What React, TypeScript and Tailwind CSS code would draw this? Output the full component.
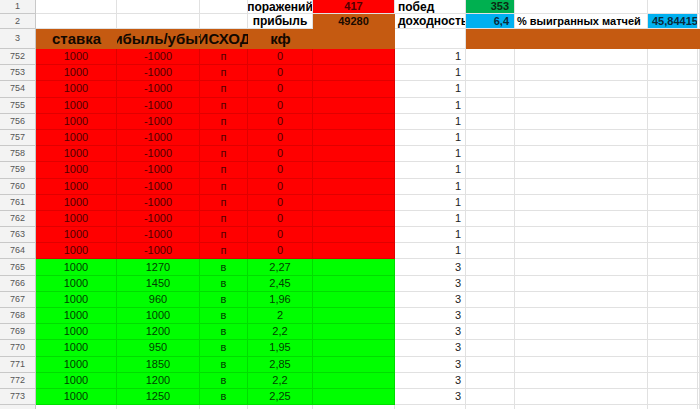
import React from "react";

const GRID =
  "grid grid-cols-[36px_81px_83px_48px_65px_82px_71px_49px_133px_50px_2px] grid-rows-[14px_15px_20px_repeat(23,16.2px)]";

type C = { t?: string; cls?: string };

function RowHead({ n }: { n: string }) {
  return (
    <div className="min-h-0 overflow-hidden leading-none flex items-center justify-center bg-[#f3f3f3] border-r border-b border-[#c8c8c8] text-[9px] text-[#555]">
      {n}
    </div>
  );
}

const white = "bg-white border-r border-b border-[#e1e1e1]";

function Cell({ t, cls }: C) {
  return (
    <div className={`min-h-0 leading-none overflow-hidden whitespace-nowrap flex items-center ${cls ?? white}`}>
      {t !== undefined ? <span className="shrink-0">{t}</span> : null}
    </div>
  );
}

const redRows = Array.from({ length: 13 }, (_, i) => ({
  n: String(752 + i),
  a: "1000",
  b: "-1000",
  c: "п",
  d: "0",
  f: "1",
  win: false,
}));

const greenData: [string, string][] = [
  ["1270", "2,27"],
  ["1450", "2,45"],
  ["960", "1,96"],
  ["1000", "2"],
  ["1200", "2,2"],
  ["950", "1,95"],
  ["1850", "2,85"],
  ["1200", "2,2"],
  ["1250", "2,25"],
];
const greenRows = greenData.map(([b, d], i) => ({
  n: String(765 + i),
  a: "1000",
  b,
  c: "в",
  d,
  f: "3",
  win: true,
}));

export default function App() {
  const rows = [...redRows, ...greenRows];
  return (
    <div className="w-[700px] h-[409px] overflow-hidden bg-white font-['Liberation_Sans',Arial,sans-serif] text-black">
      <div className={GRID}>
        {/* Row 1 */}
        <RowHead n="1" />
        <Cell />
        <Cell />
        <Cell />
        <Cell cls={`${white} justify-center font-bold text-[12px]`} t="поражений" />
        <Cell cls="bg-[#ff0000] border-r border-b border-[#e1e1e1] justify-center font-bold text-[11px] text-[#500000]" t="417" />
        <Cell cls={`${white} justify-start pl-[3px] font-bold text-[12px]`} t="побед" />
        <Cell cls="bg-[#00b050] border-r border-b border-[#e1e1e1] justify-end pr-[5px] font-bold text-[11px] text-[#0b2a12]" t="353" />
        <Cell />
        <Cell />
        <Cell />

        {/* Row 2 */}
        <RowHead n="2" />
        <Cell />
        <Cell />
        <Cell />
        <Cell cls={`${white} justify-center font-bold text-[12px]`} t="прибыль" />
        <Cell cls="bg-[#c55a11] border-r border-b border-[#c55a11] justify-center font-bold text-[11px] text-[#1a0a00]" t="49280" />
        <Cell cls={`${white} justify-start pl-[3px] font-bold text-[12px]`} t="доходность" />
        <Cell cls="bg-[#00b0f0] border-r border-b border-[#e1e1e1] justify-end pr-[5px] font-bold text-[11px] text-[#0a2a3a]" t="6,4" />
        <Cell cls={`${white} justify-start pl-[2px] font-bold text-[11px]`} t="% выигранных матчей" />
        <Cell cls="bg-[#00b0f0] border-r border-b border-[#e1e1e1] justify-start pl-[4px] font-bold text-[11px] text-[#0a2a3a]" t="45,8441558441558" />
        <Cell />

        {/* Row 3 */}
        <RowHead n="3" />
        <Cell cls="bg-[#c55a11] border-b border-[#c55a11] justify-center font-bold text-[15px] text-[#120800]" t="ставка" />
        <Cell cls="bg-[#c55a11] border-b border-[#c55a11] justify-center font-bold text-[15px] text-[#120800]" t="прибыль/убыток" />
        <Cell cls="bg-[#c55a11] border-b border-[#c55a11] justify-center font-bold text-[15px] text-[#120800]" t="ИСХОД" />
        <Cell cls="bg-[#c55a11] border-b border-[#c55a11] justify-center font-bold text-[15px] text-[#120800]" t="кф" />
        <Cell cls="bg-[#c55a11] border-r border-b border-[#c55a11]" />
        <Cell />
        <Cell cls="bg-[#c55a11] border-b border-[#c55a11]" />
        <Cell cls="bg-[#c55a11] border-b border-[#c55a11]" />
        <Cell cls="bg-[#c55a11] border-b border-[#c55a11]" />
        <Cell cls="bg-[#c55a11] border-b border-[#c55a11]" />

        {rows.map((r) => {
          const bg = r.win
            ? "bg-[#00ff00] border-r border-b border-[#00dd00] text-[#004000]"
            : "bg-[#ff0000] border-r border-b border-[#e00000] text-[#500000]";
          return (
            <React.Fragment key={r.n}>
              <RowHead n={r.n} />
              <Cell cls={`${bg} justify-center text-[11px]`} t={r.a} />
              <Cell cls={`${bg} justify-center text-[11px]`} t={r.b} />
              <Cell cls={`${bg} justify-center text-[11px]`} t={r.c} />
              <Cell cls={`${bg} justify-center text-[11px]`} t={r.d} />
              <Cell cls={bg} />
              <Cell cls={`${white} justify-end pr-[4px] text-[11px] text-[#222]`} t={r.f} />
              <Cell />
              <Cell />
              <Cell />
              <Cell />
            </React.Fragment>
          );
        })}

        <RowHead n="774" />
        <Cell />
        <Cell />
        <Cell />
        <Cell />
        <Cell />
        <Cell />
        <Cell />
        <Cell />
        <Cell />
        <Cell />
      </div>
    </div>
  );
}
